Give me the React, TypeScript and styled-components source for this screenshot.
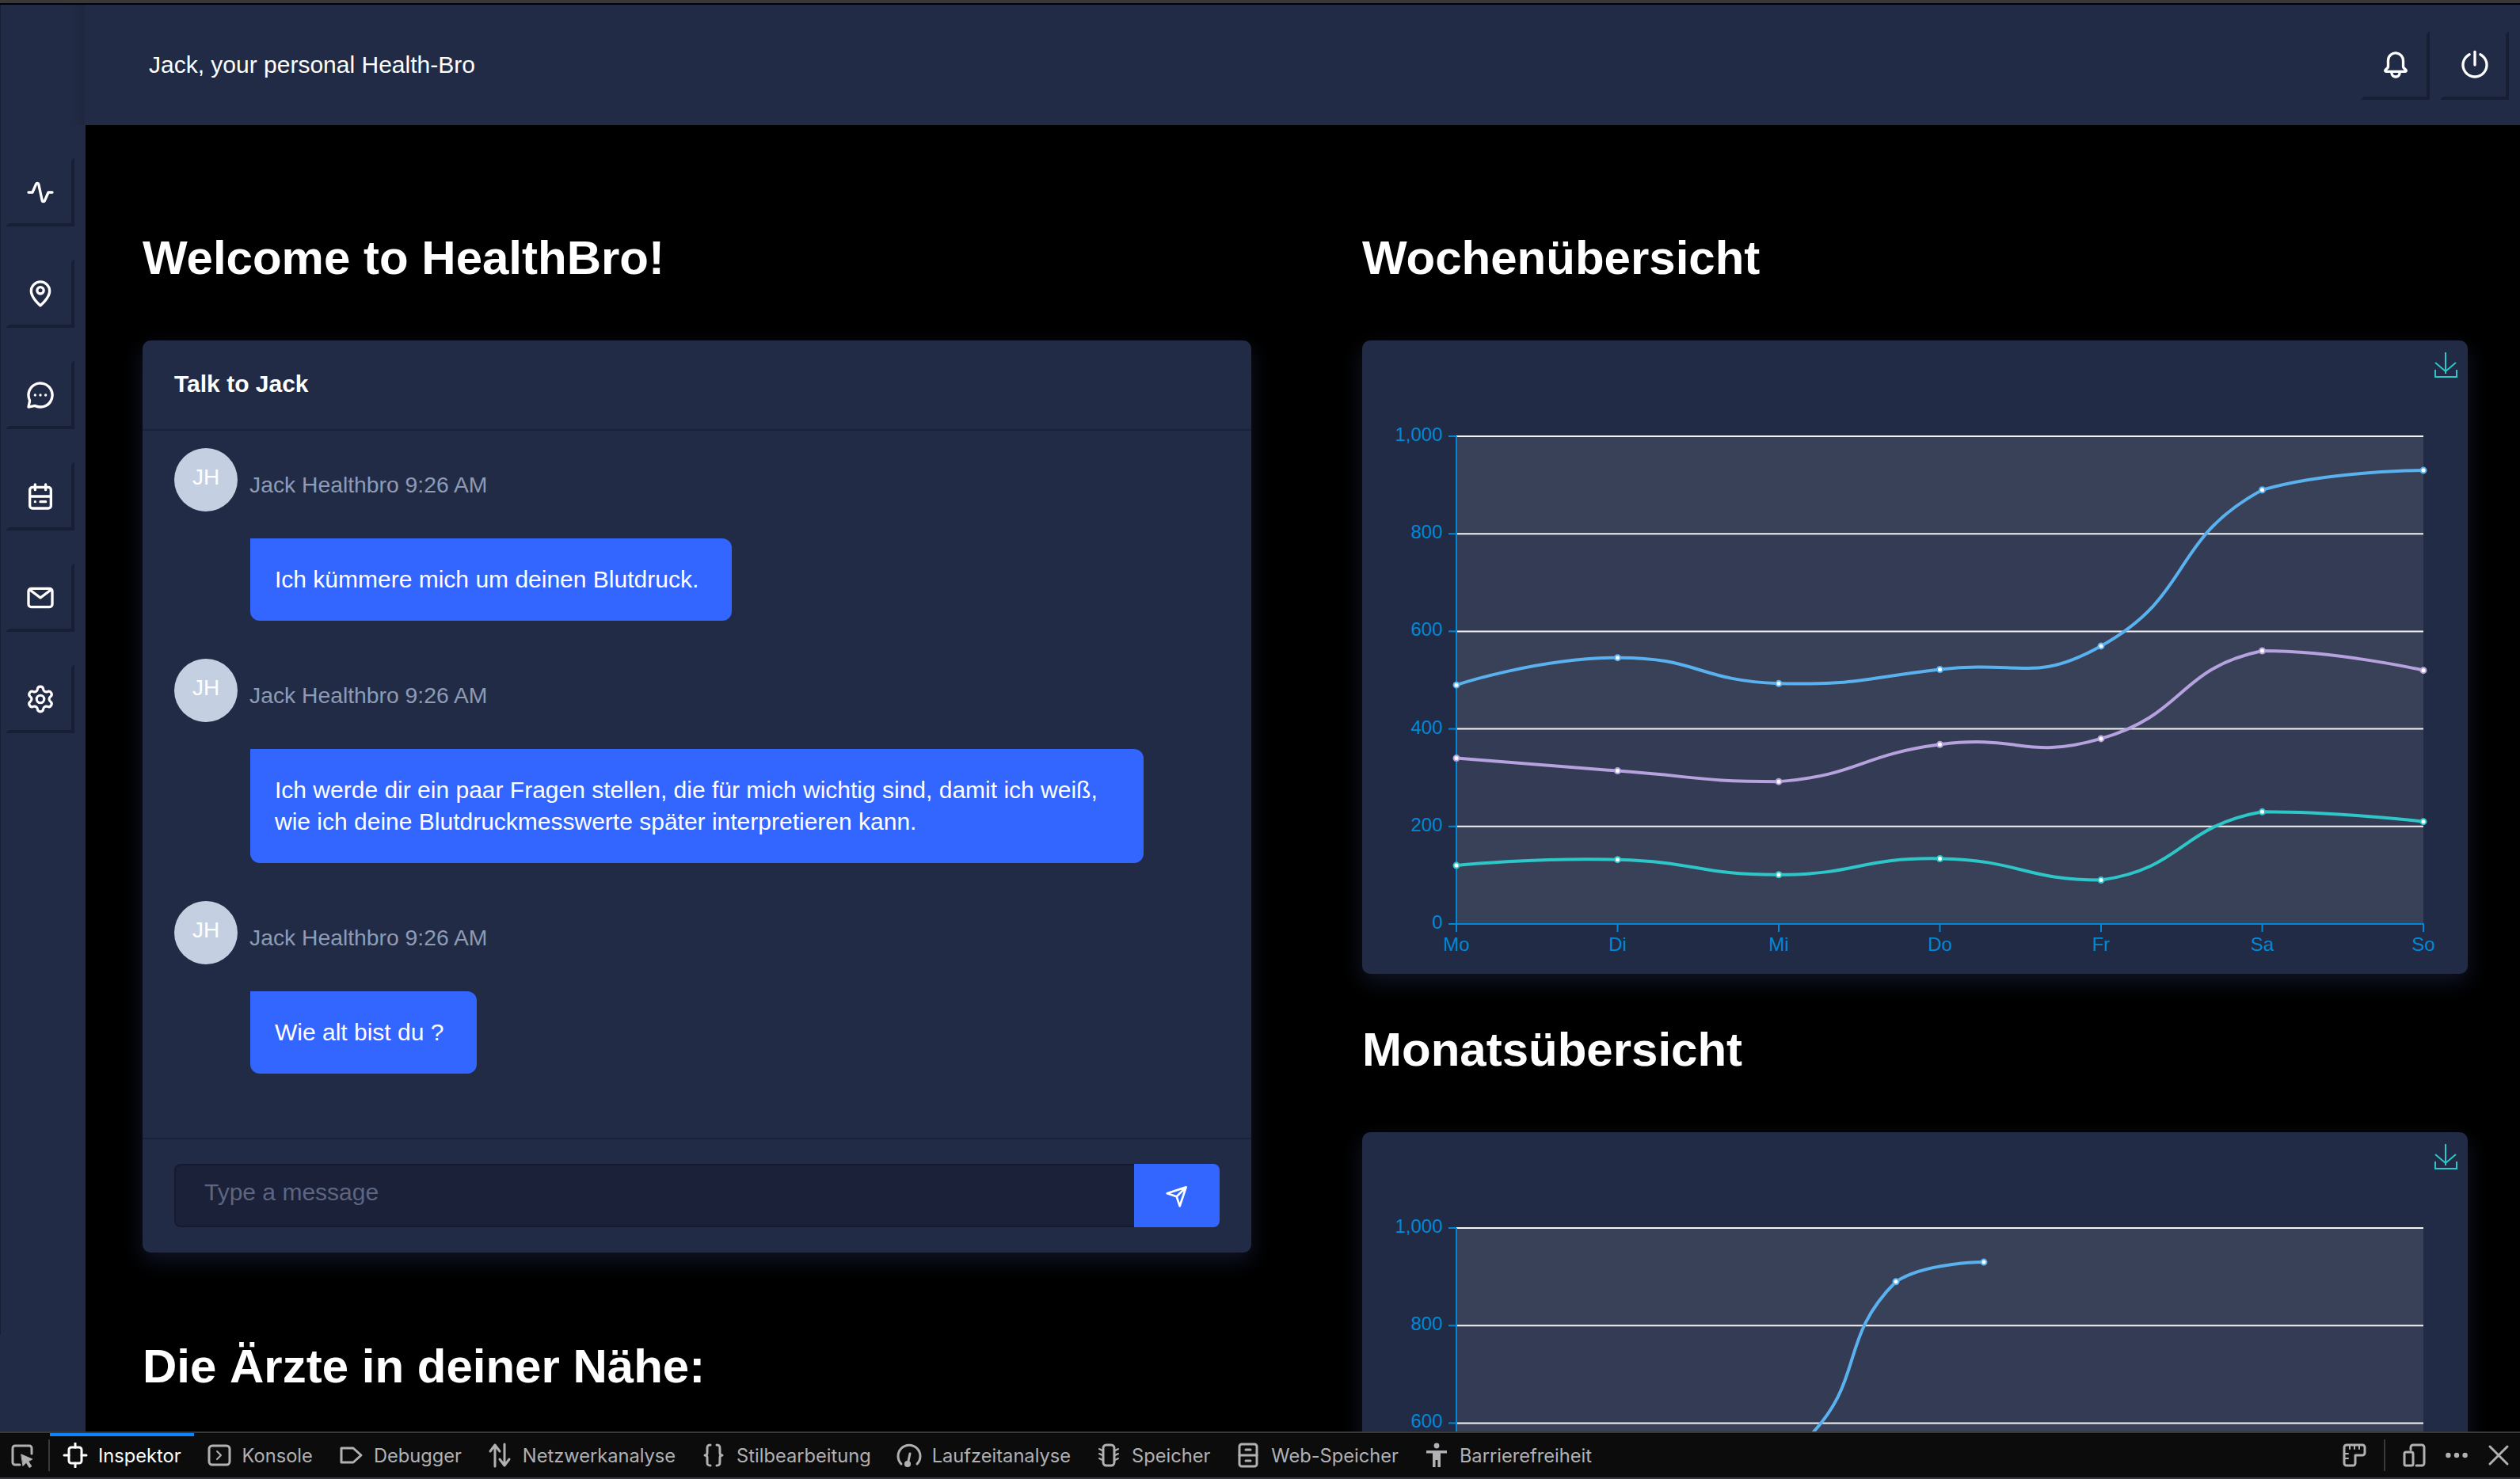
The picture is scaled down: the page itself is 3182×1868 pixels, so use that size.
import React from 'react';
import styled, { createGlobalStyle } from 'styled-components';
import { Settings } from 'lucide-react';

const GlobalStyle = createGlobalStyle`
  html, body {
    margin: 0;
    padding: 0;
    height: 100%;
    background: #000;
  }
  * {
    box-sizing: border-box;
  }
`;

const Page = styled.div`
  height: 1868px;
  display: flex;
  flex-direction: column;
  overflow: hidden;
  background: #000;
  color: #fff;
  font-family: 'Liberation Sans', Arial, sans-serif;
`;

const TopStrip = styled.div`
  height: 6px;
  flex: none;
  background: #000;
  border-top: 4px solid #38383a;
`;

const Header = styled.header`
  height: 152px;
  flex: none;
  display: flex;
  align-items: center;
  justify-content: space-between;
  padding: 0 14px 0 188px;
  background: linear-gradient(90deg, #222b45 85px, #1f2740 106px, #222b45 108px);
  box-shadow: inset 1px 0 0 #181e33;
`;

const HeaderTitle = styled.div`
  font-size: 30px;
  line-height: 40px;
`;

const HeaderActions = styled.div`
  display: flex;
  gap: 13px;
`;

const BevelButton = styled.div`
  width: 87px;
  height: 87px;
  display: flex;
  align-items: center;
  justify-content: center;
  color: #fff;
  border: 4px solid transparent;
  border-right-color: #181e33;
  border-bottom-color: #181e33;
`;

const Body = styled.div`
  flex: 1;
  min-height: 0;
  display: flex;
  overflow: hidden;
`;

const Sidebar = styled.nav`
  position: relative;
  width: 108px;
  flex: none;
  display: flex;
  flex-direction: column;
  gap: 41px;
  padding: 41px 0 0 7px;
  background: #222b45;

  &::before {
    content: '';
    position: absolute;
    left: 0;
    top: 0;
    width: 1px;
    height: 1528px;
    background: #181e33;
  }
`;

const Main = styled.main`
  flex: 1;
  min-width: 0;
  display: grid;
  grid-template-columns: 1400px 1396px;
  column-gap: 140px;
  align-items: start;
  padding: 133px 0 0 72px;
`;

const Column = styled.section`
  display: flex;
  flex-direction: column;
`;

const Title = styled.h1<{ $top?: number }>`
  margin: ${(p) => p.$top ?? 0}px 0 69px;
  font-size: 60px;
  line-height: 70px;
  font-weight: 700;
  color: #fff;
`;

const Card = styled.div`
  border-radius: 10px;
  background: #222b45;
  box-shadow: 0 10px 28px rgba(34, 43, 80, 0.5);
`;

const ChatCard = styled(Card)`
  height: 1152px;
  display: flex;
  flex-direction: column;
`;

const ChatHeader = styled.div`
  height: 114px;
  flex: none;
  display: flex;
  align-items: center;
  padding: 0 40px 2px;
  border-bottom: 2px solid #1a2138;
  font-size: 30px;
  font-weight: 700;
`;

const ChatBody = styled.div`
  flex: 1;
  display: flex;
  flex-direction: column;
  gap: 48px;
  padding: 22px 40px 0;
`;

const Message = styled.div`
  display: flex;
  flex-direction: column;
  gap: 34px;
`;

const MessageMeta = styled.div`
  display: flex;
  align-items: center;
  gap: 15px;
`;

const Avatar = styled.div`
  width: 80px;
  height: 80px;
  display: flex;
  align-items: center;
  justify-content: center;
  padding-bottom: 6px;
  border-radius: 50%;
  background: #c5cfe2;
  color: #fff;
  font-size: 28px;
`;

const Sender = styled.span`
  margin-top: 12px;
  font-size: 28.3px;
  color: #8f9bb3;
`;

const Bubble = styled.div`
  width: fit-content;
  max-width: 1128px;
  margin-left: 96px;
  padding: 32px 42px 32px 31px;
  border-radius: 0 12px 12px 12px;
  background: #3366ff;
  font-size: 30px;
  line-height: 40px;
`;

const ChatFooter = styled.form`
  height: 145px;
  flex: none;
  display: flex;
  padding: 31px 40px 0;
  border-top: 2px solid #1a2138;
`;

const MessageInput = styled.input`
  flex: 1;
  height: 80px;
  padding: 0 36px 8px;
  border: 2px solid #151a30;
  border-right: 0;
  border-radius: 8px 0 0 8px;
  outline: none;
  background: #1a2138;
  color: #fff;
  font-family: inherit;
  font-size: 30px;

  &::placeholder {
    color: #5d6580;
    opacity: 1;
  }
`;

const SendButton = styled.button`
  width: 108px;
  height: 80px;
  display: flex;
  align-items: center;
  justify-content: center;
  padding: 0 0 0 1px;
  border: 0;
  border-radius: 0 8px 8px 0;
  background: #3366ff;
  color: #fff;
`;

const ChartCard = styled(Card)`
  height: 800px;
  flex: none;
`;

const ChartSvg = styled.svg`
  display: block;
  width: 1396px;
  height: 800px;
`;

const AxisLabel = styled.text`
  fill: #0088d6;
  font-family: 'Liberation Sans', Arial, sans-serif;
  font-size: 24px;
`;

const DevTools = styled.footer`
  height: 60px;
  flex: none;
  display: flex;
  align-items: stretch;
  border-top: 2px solid #38383d;
  border-bottom: 2px solid #38383d;
  background: #0c0c0d;
  font-family: Inter, 'Liberation Sans', sans-serif;
  font-size: 23.65px;
  color: #b1b1b3;
`;

const PickerSlot = styled.div`
  width: 61px;
  flex: none;
  display: flex;
  align-items: center;
  padding-left: 12px;
`;

const Divider = styled.span`
  width: 2px;
  height: 40px;
  flex: none;
  align-self: center;
  background: #38383d;
`;

const Tab = styled.div<{ $active?: boolean }>`
  display: flex;
  align-items: center;
  gap: 13px;
  padding: 0 16px;
  color: ${(p) => (p.$active ? '#fff' : '#b1b1b3')};
  box-shadow: ${(p) => (p.$active ? 'inset 0 4px 0 #0a84ff' : 'none')};
  white-space: nowrap;
`;

const ToolActions = styled.div`
  margin-left: auto;
  display: flex;
  align-items: center;
  gap: 21px;
  padding-right: 11px;
`;

const ToolSvg = styled.svg`
  width: 32px;
  height: 32px;
  flex: none;
  fill: none;
  stroke: currentColor;
  stroke-width: 1.5;
  stroke-linecap: round;
  stroke-linejoin: round;
`;

const Glyph = styled.svg<{ $size: number }>`
  display: block;
  width: ${(p) => p.$size}px;
  height: ${(p) => p.$size}px;
  fill: currentColor;
`;

const EvaIcon: React.FC<{ size?: number; children: React.ReactNode }> = ({ size = 40, children }) => (
  <Glyph $size={size} viewBox="0 0 24 24">
    {children}
  </Glyph>
);

const ToolIcon: React.FC<{ children: React.ReactNode }> = ({ children }) => (
  <ToolSvg viewBox="0 0 16 16">{children}</ToolSvg>
);

const navIcons = [
  <EvaIcon key="activity">
    <path d="M14.33 20h-.21a2 2 0 0 1-1.76-1.58L9.68 6l-2.76 6.4A1 1 0 0 1 6 13H3a1 1 0 0 1 0-2h2.34l2.51-5.79a2 2 0 0 1 3.79.38L14.32 18l2.76-6.38A1 1 0 0 1 18 11h3a1 1 0 0 1 0 2h-2.34l-2.51 5.79A2 2 0 0 1 14.33 20z" />
  </EvaIcon>,
  <EvaIcon key="pin">
    <path d="M12 2a8 8 0 0 0-8 7.92c0 5.48 7.05 11.58 7.35 11.84a1 1 0 0 0 1.3 0C13 21.5 20 15.4 20 9.92A8 8 0 0 0 12 2zm0 17.65c-1.67-1.59-6-6-6-9.73a6 6 0 0 1 12 0c0 3.7-4.33 8.14-6 9.73z" />
    <path d="M12 6a3.5 3.5 0 1 0 3.5 3.5A3.5 3.5 0 0 0 12 6zm0 5a1.5 1.5 0 1 1 1.5-1.5A1.5 1.5 0 0 1 12 11z" />
  </EvaIcon>,
  <EvaIcon key="chat">
    <circle cx="12" cy="12" r="1" />
    <circle cx="16" cy="12" r="1" />
    <circle cx="8" cy="12" r="1" />
    <path d="M19.07 4.93a10 10 0 0 0-16.28 11 1.06 1.06 0 0 1 .09.64L2 20.8a1 1 0 0 0 .27.91A1 1 0 0 0 3 22h.2l4.28-.86a1.26 1.26 0 0 1 .64.09 10 10 0 0 0 11-16.28zm.83 8.36a8 8 0 0 1-11 6.08 3.26 3.26 0 0 0-1.25-.26 3.43 3.43 0 0 0-.56.05l-2.82.57.57-2.82a3.09 3.09 0 0 0-.21-1.81 8 8 0 0 1 6.08-11 8 8 0 0 1 9.19 9.19z" />
  </EvaIcon>,
  <EvaIcon key="calendar">
    <path d="M18 4h-1V3a1 1 0 0 0-2 0v1H9V3a1 1 0 0 0-2 0v1H6a3 3 0 0 0-3 3v12a3 3 0 0 0 3 3h12a3 3 0 0 0 3-3V7a3 3 0 0 0-3-3zM6 6h1v1a1 1 0 0 0 2 0V6h6v1a1 1 0 0 0 2 0V6h1a1 1 0 0 1 1 1v4H5V7a1 1 0 0 1 1-1zm12 14H6a1 1 0 0 1-1-1v-6h14v6a1 1 0 0 1-1 1z" />
    <circle cx="8" cy="16" r="1" />
    <path d="M16 15h-4a1 1 0 0 0 0 2h4a1 1 0 0 0 0-2z" />
  </EvaIcon>,
  <EvaIcon key="mail">
    <path d="M19 4H5a3 3 0 0 0-3 3v10a3 3 0 0 0 3 3h14a3 3 0 0 0 3-3V7a3 3 0 0 0-3-3zm-.67 2L12 10.75 5.67 6zM19 18H5a1 1 0 0 1-1-1V7.25l7.4 5.55a1 1 0 0 0 .6.2 1 1 0 0 0 .6-.2L20 7.25V17a1 1 0 0 1-1 1z" />
  </EvaIcon>,
  <Settings key="settings" size={38} strokeWidth={2} />,
];

const messages = [
  'Ich kümmere mich um deinen Blutdruck.',
  'Ich werde dir ein paar Fragen stellen, die für mich wichtig sind, damit ich weiß, wie ich deine Blutdruckmesswerte später interpretieren kann.',
  'Wie alt bist du ?',
];

// stacked values as the chart draws them, bottom line first
const series = [
  { color: '#2ec7c9', values: [120, 132, 101, 134, 90, 230, 210] },
  { color: '#b6a2de', values: [340, 314, 292, 368, 380, 560, 520] },
  { color: '#5ab1ef', values: [490, 546, 493, 522, 570, 890, 930] },
];

const weekDays = ['Mo', 'Di', 'Mi', 'Do', 'Fr', 'Sa', 'So'];
const months = ['Jan', 'Feb', 'Mär', 'Apr', 'Mai', 'Jun', 'Jul', 'Aug', 'Sep', 'Okt', 'Nov', 'Dez'];

const plot = { left: 119, right: 1340, top: 121, bottom: 737 };
const gridValues = [1000, 800, 600, 400, 200, 0];

const valueY = (v: number) => plot.bottom - ((plot.bottom - plot.top) * v) / 1000;

// smooth line, control points kept inside the bounding box of the whole series
const smoothPath = (pts: [number, number][]) => {
  const smooth = 0.5;
  const ys = pts.map((p) => p[1]);
  const minY = Math.min(...ys);
  const maxY = Math.max(...ys);
  const fit = (y: number) => Math.max(minY, Math.min(maxY, y));

  let d = `M${pts[0][0]} ${pts[0][1]}`;
  let cp0: [number, number] = pts[0];
  for (let i = 1; i < pts.length; i++) {
    const [x, y] = pts[i];
    const [px, py] = pts[i - 1];
    const next = pts[i + 1];
    let cp1: [number, number] = [x, y];
    let nextCp0: [number, number] = [x, y];
    if (next) {
      const vx = (next[0] - px) * smooth;
      const vy = (next[1] - py) * smooth;
      const prevLen = Math.hypot(x - px, y - py);
      const nextLen = Math.hypot(next[0] - x, next[1] - y);
      const sum = prevLen + nextLen;
      cp1 = [x - (vx * prevLen) / sum, fit(y - (vy * prevLen) / sum)];
      nextCp0 = [x + (vx * nextLen) / sum, fit(y + (vy * nextLen) / sum)];
    }
    d += ` C${cp0[0]} ${cp0[1]} ${cp1[0]} ${cp1[1]} ${x} ${y}`;
    cp0 = nextCp0;
  }
  return d;
};

// labelsFrom: lowest axis value that still lies in view; below it the card runs off the page
const LineChart: React.FC<{ categories: string[]; labelsFrom?: number }> = ({ categories, labelsFrom }) => {
  const step = (plot.right - plot.left) / (categories.length - 1);
  const xAt = (i: number) => plot.left + i * step;
  const yLabels = gridValues.filter((v) => v >= (labelsFrom ?? 0));

  return (
    <ChartSvg viewBox="0 0 1396 800">
      <g stroke="#2ec7c9" strokeWidth="2" fill="none">
        <path d="M1368 15v27M1355 28l13 11 13-11M1355 37v9h27v-9" />
      </g>
      {gridValues.slice(0, 5).map((v, i) => (
        <rect
          key={v}
          x={plot.left}
          y={valueY(v)}
          width={plot.right - plot.left}
          height={(plot.bottom - plot.top) / 5}
          fill={i % 2 === 0 ? '#394159' : '#343c55'}
        />
      ))}
      {gridValues.slice(0, 5).map((v) => (
        <line key={v} x1={plot.left} x2={plot.right} y1={valueY(v)} y2={valueY(v)} stroke="#f4f4f4" strokeWidth="2" />
      ))}
      <g stroke="#0088d6" strokeWidth="2">
        <line x1={plot.left} x2={plot.left} y1={plot.top} y2={plot.bottom} />
        <line x1={plot.left} x2={plot.right + 1} y1={plot.bottom} y2={plot.bottom} />
        {gridValues.map((v) => (
          <line key={v} x1={plot.left - 10} x2={plot.left} y1={valueY(v)} y2={valueY(v)} />
        ))}
        {categories.map((c, i) => (
          <line key={c} x1={xAt(i)} x2={xAt(i)} y1={plot.bottom} y2={plot.bottom + 10} />
        ))}
      </g>
      {yLabels.map((v) => (
        <AxisLabel key={v} x={plot.left - 17.5} y={valueY(v) + 6} textAnchor="end">
          {v.toLocaleString('en-US')}
        </AxisLabel>
      ))}
      {labelsFrom === undefined &&
        categories.map((c, i) => (
          <AxisLabel key={c} x={xAt(i)} y={771} textAnchor="middle">
            {c}
          </AxisLabel>
        ))}
      {series.map((s) => {
        const pts = s.values.map((v, i): [number, number] => [xAt(i), valueY(v)]);
        return (
          <g key={s.color}>
            <path d={smoothPath(pts)} fill="none" stroke={s.color} strokeWidth="4" />
            {pts.map(([x, y]) => (
              <circle key={x} cx={x} cy={y} r="3.5" fill="#fff" stroke={s.color} strokeWidth="2" />
            ))}
          </g>
        );
      })}
    </ChartSvg>
  );
};

const App: React.FC = () => {
  return (
    <Page>
      <GlobalStyle />
      <TopStrip />
      <Header>
        <HeaderTitle>Jack, your personal Health-Bro</HeaderTitle>
        <HeaderActions>
          <BevelButton>
            <EvaIcon>
              <path d="M20.52 15.21l-1.8-1.81V8.94a6.86 6.86 0 0 0-5.82-6.88 6.74 6.74 0 0 0-7.62 6.67v4.67l-1.8 1.81A1.64 1.64 0 0 0 4.64 18H8v.34A3.84 3.84 0 0 0 12 22a3.84 3.84 0 0 0 4-3.66V18h3.36a1.64 1.64 0 0 0 1.16-2.79zM14 18.34A1.88 1.88 0 0 1 12 20a1.88 1.88 0 0 1-2-1.66V18h4zM5.51 16l1.18-1.18a2 2 0 0 0 .59-1.42V8.73A4.73 4.73 0 0 1 8.9 5.17 4.71 4.71 0 0 1 12.65 4a4.86 4.86 0 0 1 4.07 4.94v4.46a2 2 0 0 0 .58 1.42L18.49 16z" />
            </EvaIcon>
          </BevelButton>
          <BevelButton>
            <EvaIcon>
              <path d="M12 13a1 1 0 0 0 1-1V2a1 1 0 0 0-2 0v10a1 1 0 0 0 1 1z" />
              <path d="M16.59 3.11a1 1 0 0 0-.92 1.78 8 8 0 1 1-7.34 0 1 1 0 1 0-.92-1.78 10 10 0 1 0 9.18 0z" />
            </EvaIcon>
          </BevelButton>
        </HeaderActions>
      </Header>
      <Body>
        <Sidebar>
          {navIcons.map((icon) => (
            <BevelButton key={icon.key}>{icon}</BevelButton>
          ))}
        </Sidebar>
        <Main>
          <Column>
            <Title>Welcome to HealthBro!</Title>
            <ChatCard>
              <ChatHeader>Talk to Jack</ChatHeader>
              <ChatBody>
                {messages.map((text) => (
                  <Message key={text}>
                    <MessageMeta>
                      <Avatar>JH</Avatar>
                      <Sender>Jack Healthbro 9:26 AM</Sender>
                    </MessageMeta>
                    <Bubble>{text}</Bubble>
                  </Message>
                ))}
              </ChatBody>
              <ChatFooter>
                <MessageInput placeholder="Type a message" />
                <SendButton type="button">
                  <EvaIcon size={32}>
                    <path d="M21 4a1.31 1.31 0 0 0-.06-.27v-.09a1 1 0 0 0-.2-.3 1 1 0 0 0-.29-.19h-.09a.86.86 0 0 0-.31-.15H20a1 1 0 0 0-.3 0l-18 6a1 1 0 0 0 0 1.9l8.53 2.84 2.84 8.53a1 1 0 0 0 1.9 0l6-18A1 1 0 0 0 21 4zm-4.7 2.29l-5.57 5.57L5.16 10zM14 18.84l-1.86-5.57 5.57-5.57z" />
                  </EvaIcon>
                </SendButton>
              </ChatFooter>
            </ChatCard>
            <Title $top={109}>Die Ärzte in deiner Nähe:</Title>
          </Column>
          <Column>
            <Title>Wochenübersicht</Title>
            <ChartCard>
              <LineChart categories={weekDays} />
            </ChartCard>
            <Title $top={61}>Monatsübersicht</Title>
            <ChartCard>
              <LineChart categories={months} labelsFrom={600} />
            </ChartCard>
          </Column>
        </Main>
      </Body>
      <DevTools>
        <PickerSlot>
          <ToolIcon>
            <path d="M6.5 14H3.5A1.5 1.5 0 0 1 2 12.5v-9A1.5 1.5 0 0 1 3.5 2h9A1.5 1.5 0 0 1 14 3.5V7" />
            <path d="M7.5 7.5l7 3-2.6 1.3 2 3.2-1.4.8-1.9-3.2-2 2z" fill="currentColor" strokeWidth="0.5" />
          </ToolIcon>
        </PickerSlot>
        <Divider />
        <Tab $active>
          <ToolIcon>
            <rect x="4" y="3" width="8" height="10" rx="1.5" />
            <path d="M8 .5V3M8 13v2.5M1 8h3M12 8h3" />
          </ToolIcon>
          Inspektor
        </Tab>
        <Tab>
          <ToolIcon>
            <rect x="1.5" y="2" width="13" height="12" rx="2" />
            <path d="M6.5 5.5L9 8l-2.5 2.5" strokeWidth="1" />
          </ToolIcon>
          Konsole
        </Tab>
        <Tab>
          <ToolIcon>
            <path d="M2 3.5h7.5l5 4.5-5 4.5H2z" />
          </ToolIcon>
          Debugger
        </Tab>
        <Tab>
          <ToolIcon>
            <path d="M5 15V1.5M2 5.5l3-4 3 4M11 1v13.5M8 10.5l3 4 3-4" />
          </ToolIcon>
          Netzwerkanalyse
        </Tab>
        <Tab>
          <ToolIcon>
            <path d="M6 1.5c-2 0-2 1-2 2.5v2.5C4 7.5 3.5 8 2.5 8c1 0 1.5.5 1.5 1.5V12c0 1.5 0 2.5 2 2.5" />
            <path d="M10 1.5c2 0 2 1 2 2.5v2.5c0 1 .5 1.5 1.5 1.5-1 0-1.5.5-1.5 1.5V12c0 1.5 0 2.5-2 2.5" />
          </ToolIcon>
          Stilbearbeitung
        </Tab>
        <Tab>
          <ToolIcon>
            <path d="M3 13.5a7 7 0 1 1 10 0" />
            <path d="M7.2 13l1.3-6" />
            <circle cx="7" cy="13.5" r="1.3" fill="currentColor" />
          </ToolIcon>
          Laufzeitanalyse
        </Tab>
        <Tab>
          <ToolIcon>
            <rect x="4.5" y="1.5" width="7" height="13" rx="2" />
            <path d="M2 4l2 1M2 7l2 1M2 10l2 1M14 4l-2 1M14 7l-2 1M14 10l-2 1" strokeWidth="1" />
          </ToolIcon>
          Speicher
        </Tab>
        <Tab>
          <ToolIcon>
            <rect x="2.5" y="1" width="11" height="14" rx="1.5" />
            <path d="M2.5 8h11M6.5 4.5h3M6.5 11.5h3" />
          </ToolIcon>
          Web-Speicher
        </Tab>
        <Tab>
          <ToolIcon>
            <circle cx="8" cy="2" r="1.7" fill="currentColor" stroke="none" />
            <path d="M1.5 5h13v1.8h-4v8.7H8.7V11H7.3v4.5H5.5V6.8h-4z" fill="currentColor" stroke="none" />
          </ToolIcon>
          Barrierefreiheit
        </Tab>
        <ToolActions>
          <ToolIcon>
            <path d="M1.5 3A1.5 1.5 0 0 1 3 1.5h10A1.5 1.5 0 0 1 14.5 3v3.5A1.5 1.5 0 0 1 13 8H8.5v5A1.5 1.5 0 0 1 7 14.5H3A1.5 1.5 0 0 1 1.5 13z" />
            <path d="M5 2v2M8 2v2M11 2v2M2 7h2M2 10h2" strokeWidth="1" />
          </ToolIcon>
          <Divider />
          <ToolIcon>
            <path d="M5.5 4.5V3A1.5 1.5 0 0 1 7 1.5h5.5A1.5 1.5 0 0 1 14 3v10a1.5 1.5 0 0 1-1.5 1.5H9" />
            <rect x="1.5" y="6" width="5.5" height="8.5" rx="1" />
          </ToolIcon>
          <ToolIcon>
            <circle cx="2.7" cy="8" r="1.6" fill="currentColor" stroke="none" />
            <circle cx="8" cy="8" r="1.6" fill="currentColor" stroke="none" />
            <circle cx="13.3" cy="8" r="1.6" fill="currentColor" stroke="none" />
          </ToolIcon>
          <ToolIcon>
            <path d="M2.5 2.5l11 11M13.5 2.5l-11 11" />
          </ToolIcon>
        </ToolActions>
      </DevTools>
    </Page>
  );
};

export default App;
